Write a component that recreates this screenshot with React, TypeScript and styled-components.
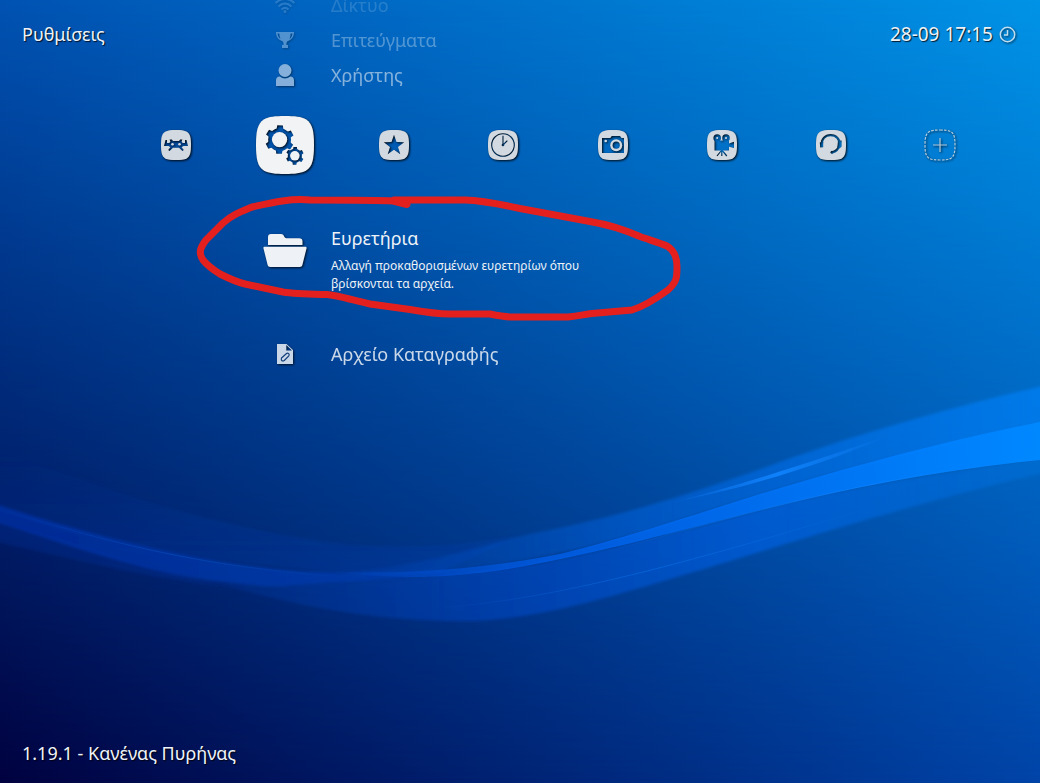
import React from "react";
import styled, { createGlobalStyle, css } from "styled-components";

const GlobalStyle = createGlobalStyle`
  * { box-sizing: border-box; }
  body { margin: 0; background: #00154f; }
  button { font: inherit; color: inherit; background: none; border: 0; padding: 0; text-align: left; cursor: pointer; }
`;

const Screen = styled.div`
  position: relative;
  isolation: isolate;
  display: flex;
  flex-direction: column;
  min-height: 100vh;
  overflow: hidden;
  color: #eef2f7;
  font-family: "Noto Sans", "Open Sans", sans-serif;
  font-size: 18px;
  line-height: 24px;
  text-shadow: 1px 1px 1px rgba(0, 0, 0, 0.8);
  background: linear-gradient(to right, #010240, #0044a8);
`;

const TopGlow = styled.div`
  position: absolute;
  inset: 0;
  z-index: -2;
  background: linear-gradient(to right, #0052b2, #0093e6);
  mask-image: linear-gradient(to bottom, #000, transparent);
`;

const Waves = styled.svg`
  position: absolute;
  inset: 0;
  z-index: -1;
  width: 100%;
  height: 100%;
`;

const Header = styled.header`
  display: grid;
  grid-template-columns: 241px 1fr auto;
  height: 92px;
  padding: 0 24px 0 22px;
  overflow: hidden;
`;

const Title = styled.h1`
  margin: 0;
  padding-top: 22px;
  font-size: 18px;
  font-weight: 400;
  line-height: 24px;
`;

const PreviousItems = styled.div`
  display: flex;
  flex-direction: column;
  justify-content: flex-end;
  align-items: flex-start;
  height: 92px;
`;

const Clock = styled.div`
  display: flex;
  align-items: center;
  gap: 6px;
  height: 24px;
  margin-top: 22px;
  font-size: 19px;
`;

const MenuItem = styled.button<{ $fade?: number }>`
  display: grid;
  grid-template-columns: 44px auto;
  column-gap: 24px;
  align-items: center;
  flex: none;
  height: 35px;
  opacity: ${(p) => p.$fade ?? 1};
`;

const IconCell = styled.span`
  display: flex;
  justify-content: center;
`;

const Glyph = styled.svg`
  display: block;
  fill: currentColor;
  filter: drop-shadow(1px 1px 1px rgba(0, 0, 0, 0.8));
`;

const Tabs = styled.nav`
  display: grid;
  grid-template-columns: repeat(8, 1fr);
  place-items: center;
  height: 106px;
  padding: 0 45px 0 121px;
`;

const TabButton = styled.button<{ $active?: boolean }>`
  display: block;
  width: 30px;
  height: 30px;
  color: #d3d9e0;
  ${(p) =>
    p.$active &&
    css`
      width: 58px;
      height: 58px;
      color: #f2f3f4;
    `}
  svg {
    display: block;
    width: 100%;
    height: 100%;
    overflow: visible;
    filter: drop-shadow(1px 1px 1px rgba(0, 0, 0, 0.9));
  }
`;

const List = styled.main`
  display: flex;
  flex-direction: column;
  align-items: flex-start;
  gap: 43px;
  padding: 28px 0 0 263px;
`;

const SelectedItem = styled.div`
  position: relative;
`;

const SelectedButton = styled.button`
  display: grid;
  grid-template-columns: 44px 300px;
  column-gap: 24px;
`;

const FolderCell = styled.span`
  padding-top: 7px;
`;

const Details = styled.span`
  display: flex;
  flex-direction: column;
  gap: 7px;
`;

const Description = styled.span`
  font-size: 12px;
  line-height: 18px;
`;

const Marker = styled.svg`
  position: absolute;
  top: -32px;
  left: -68px;
  width: 490px;
  height: 130px;
  pointer-events: none;
`;

const Footer = styled.footer`
  margin-top: auto;
  padding: 0 22px 18px;
`;

const SQUIRCLE =
  "M15 0C20 0 23.5 .3 26 1.8C29.3 4 30 8 30 15S29.3 26 26 28.2C23.5 29.7 20 30 15 30S6.5 29.7 4 28.2C.7 26 0 22 0 15S.7 4 4 1.8C6.5 .3 10 0 15 0Z";

function Tile({ id, children }: { id: string; children: React.ReactNode }) {
  return (
    <svg viewBox="0 0 30 30" aria-hidden="true">
      <mask id={id}>
        <path d={SQUIRCLE} fill="#fff" />
        {children}
      </mask>
      <rect width="30" height="30" fill="currentColor" mask={`url(#${id})`} />
    </svg>
  );
}

function Gear({ x, y, r }: { x: number; y: number; r: number }) {
  return (
    <g transform={`translate(${x} ${y}) scale(${r})`}>
      <circle r=".82" />
      {[0, 60, 120, 180, 240, 300].map((a) => (
        <path key={a} d="M-.25 -.7L-.2 -1.02H.2L.25 -.7Z" transform={`rotate(${a + 2})`} />
      ))}
      <circle r=".55" fill="#fff" />
    </g>
  );
}

const tabs: { id: string; label: string; glyph: React.ReactNode }[] = [
  {
    id: "main",
    label: "Κύριο Μενού",
    glyph: (
      <g>
        <path d="M8.6 9.600H10.800L12 11H18L19.200 9.600H21.400L20.600 11.600L21.600 13H24V10H25.500L27 16H22.400L20.600 17.200L22.800 20L21.400 21L18 17.800H12L8.600 21L7.200 20L9.400 17.200L7.600 16H3L4.500 10H6V13H8.400L9.400 11.600Z" />
        <circle cx="11.500" cy="14.300" r="1.300" fill="#fff" />
        <circle cx="18.500" cy="14.300" r="1.300" fill="#fff" />
      </g>
    ),
  },
  {
    id: "settings",
    label: "Ρυθμίσεις",
    glyph: (
      <g>
        <Gear x={12.2} y={12.2} r={7.2} />
        <Gear x={20.1} y={20.6} r={4.5} />
      </g>
    ),
  },
  {
    id: "favorites",
    label: "Αγαπημένα",
    glyph: <path d="M15 4.8L17.5 12.1L25.2 12.2L19 16.9L21.3 24.2L15 19.8L8.7 24.2L11 16.9L4.8 12.2L12.5 12.1Z" />,
  },
  {
    id: "history",
    label: "Ιστορικό",
    glyph: (
      <g fill="none" stroke="#000" strokeWidth="1.1">
        <circle cx="15" cy="15" r="11.3" />
        <path d="M15 6V15L19 11" strokeLinecap="round" />
        <circle cx="15" cy="15" r=".8" fill="#000" />
      </g>
    ),
  },
  {
    id: "images",
    label: "Εικόνες",
    glyph: (
      <g>
        <path d="M4 8H12.3L13.8 6H22L23.5 8H26V23H4Z" />
        <circle cx="18.2" cy="15.2" r="6" fill="#fff" />
        <circle cx="18.2" cy="15.2" r="3.6" />
        <circle cx="7.7" cy="11" r="1.3" fill="#fff" />
      </g>
    ),
  },
  {
    id: "video",
    label: "Βίντεο",
    glyph: (
      <g>
        <circle cx="10.2" cy="8" r="3.8" />
        <circle cx="19" cy="8" r="3.8" />
        <path d="M7.5 10.5H22V13.5L27 11.8V18L22 16.8V20.5H7.5Z" />
        <path d="M14.8 20L10 26M14.8 20V26M14.8 20L19.8 26" stroke="#000" strokeWidth="1.2" />
        <circle cx="10.2" cy="8" r="1" fill="#fff" />
        <circle cx="19" cy="8" r="1" fill="#fff" />
      </g>
    ),
  },
  {
    id: "netplay",
    label: "Netplay",
    glyph: (
      <g>
        <path
          d="M5.800 15C5.200 9 9.500 5.200 14.500 5.200C20.500 5.200 24 9.300 23.400 14.500C22.800 18.500 20 21.500 16 22.500"
          fill="none"
          stroke="#000"
          strokeWidth="2.200"
        />
        <path d="M3.800 12.500L7.200 12V17.200L4.200 17.500Z" />
        <path d="M22 10.500H25.600V16.400L23.600 18.600L21.400 17Z" />
        <circle cx="16" cy="22.300" r="1.500" />
      </g>
    ),
  },
];

function Wave() {
  return (
    <Waves viewBox="0 0 1040 783" preserveAspectRatio="none" aria-hidden="true">
      <defs>
        <linearGradient id="haze" x1="0" y1="0" x2="0" y2="1">
          <stop offset="0" stopColor="#0045d0" stopOpacity="0" />
          <stop offset="1" stopColor="#0045d0" stopOpacity=".2" />
        </linearGradient>
        <linearGradient id="upper">
          <stop offset="0" stopColor="#0058e8" stopOpacity=".08" />
          <stop offset=".4" stopColor="#0070ff" stopOpacity=".36" />
          <stop offset="1" stopColor="#0084ff" stopOpacity=".6" />
        </linearGradient>
        <linearGradient id="lower">
          <stop offset="0" stopColor="#0048d8" stopOpacity=".12" />
          <stop offset=".35" stopColor="#0050e0" stopOpacity=".4" />
          <stop offset=".65" stopColor="#0068f8" stopOpacity=".5" />
          <stop offset="1" stopColor="#0078e8" stopOpacity=".35" />
        </linearGradient>
        <linearGradient id="core">
          <stop offset="0" stopColor="#0060ff" stopOpacity="0" />
          <stop offset=".3" stopColor="#0066ff" stopOpacity=".65" />
          <stop offset="1" stopColor="#0088ff" stopOpacity="1" />
        </linearGradient>
        <linearGradient id="left">
          <stop offset="0" stopColor="#0038c0" stopOpacity=".5" />
          <stop offset=".7" stopColor="#0048d8" stopOpacity=".45" />
          <stop offset="1" stopColor="#0048d8" stopOpacity=".1" />
        </linearGradient>
        <linearGradient id="streak">
          <stop offset="0" stopColor="#1880ff" stopOpacity="0" />
          <stop offset=".5" stopColor="#1084ff" stopOpacity=".9" />
          <stop offset="1" stopColor="#1884ff" stopOpacity="0" />
        </linearGradient>
        <filter id="soft" x="-5%" y="-10%" width="110%" height="120%">
          <feGaussianBlur stdDeviation="1.5" />
        </filter>
      </defs>
      <g filter="url(#soft)">
        <path fill="url(#haze)" d="M-10 445C100 490 230 532 350 545C410 549 460 546 520 536L440 572C330 580 130 555 -10 508Z" />
        <path fill="#0038b8" fillOpacity=".2" d="M-10 518C80 545 170 578 240 587C170 583 90 563 -10 540Z" />
        <path
          fill="url(#left)"
          d="M-10 502C80 532 190 562 300 571C380 575 460 571 530 561L530 567C470 578 350 581 280 586C180 586 90 552 -10 520Z"
        />
        <path
          fill="url(#upper)"
          d="M340 573C420 566 480 547 530 534C620 517 700 491 780 462C870 430 950 408 1050 384V424C900 450 780 488 680 520C580 553 470 577 340 573Z"
        />
        <path
          fill="url(#lower)"
          d="M220 584C300 588 440 580 520 567C620 548 700 526 780 505C870 483 950 472 1050 458V471C900 507 800 540 720 564C600 600 530 623 450 621C360 619 290 604 220 584Z"
        />
      </g>
      <path
        fill="url(#core)"
        d="M330 571C410 576 500 566 560 554C640 534 710 509 780 488C870 461 950 440 1040 422V460C950 469 850 488 780 505C690 528 600 553 520 567C450 579 390 580 330 571Z"
      />
      <path fill="url(#streak)" d="M665 504C740 486 810 462 890 435C820 466 745 488 665 504Z" />
      <path fill="none" stroke="url(#streak)" strokeOpacity=".4" d="M430 608C560 602 720 552 880 505" />
      <path fill="none" stroke="url(#streak)" strokeOpacity=".25" d="M0 509C100 540 200 568 350 577" />
      <path fill="none" stroke="url(#streak)" strokeOpacity=".6" d="M600 553C700 528 860 475 1040 460" />
    </Waves>
  );
}

export default function App() {
  return (
    <Screen>
      <GlobalStyle />
      <TopGlow />
      <Wave />
      <Header>
        <Title>Ρυθμίσεις</Title>
        <PreviousItems>
          <MenuItem $fade={0.16}>
            <IconCell>
              <Glyph width="22" height="18" viewBox="0 0 22 18">
                <g fill="none" stroke="currentColor" strokeWidth="2">
                  <path d="M1.5 7C7 1.500 15 1.500 20.500 7" />
                  <path d="M4.500 10.500C8.500 6.500 13.500 6.500 17.500 10.500" />
                  <path d="M7.500 13.500C9.700 11.500 12.300 11.500 14.500 13.500" />
                </g>
                <circle cx="11" cy="15.500" r="1.500" />
              </Glyph>
            </IconCell>
            Δίκτυο
          </MenuItem>
          <MenuItem $fade={0.34}>
            <IconCell>
              <Glyph width="20" height="18" viewBox="0 0 20 18">
                <path d="M1 1H19C19 5.500 17 8.500 12.500 10.200C11.500 11 11.300 12 11.500 14H13V17H7V14H8.500C8.700 12 8.500 11 7.500 10.200C3 8.500 1 5.500 1 1ZM2.500 2.400C2.800 5 3.700 6.800 5.500 7.800C4.700 6 4.400 4.300 4.300 2.400ZM15.700 2.400C15.600 4.300 15.300 6 14.500 7.800C16.300 6.800 17.200 5 17.500 2.400Z" fillRule="evenodd" />
              </Glyph>
            </IconCell>
            Επιτεύγματα
          </MenuItem>
          <MenuItem $fade={0.56}>
            <IconCell>
              <Glyph width="20" height="24" viewBox="0 0 20 24">
                <circle cx="10" cy="7.500" r="6.500" />
                <path d="M1 23V17.500C1 15 2.500 13.800 4.800 13.600C7.700 16.200 12.300 16.200 15.200 13.600C17.500 13.800 19 15 19 17.500V23Z" />
              </Glyph>
            </IconCell>
            Χρήστης
          </MenuItem>
        </PreviousItems>
        <Clock>
          <time>28-09 17:15</time>
          <Glyph width="17" height="17" viewBox="0 0 17 17" opacity=".8">
            <g fill="none" stroke="currentColor" strokeWidth="1.500">
              <circle cx="8.500" cy="8.500" r="7.200" />
              <path d="M8.500 4V9H5" />
            </g>
          </Glyph>
        </Clock>
      </Header>
      <Tabs>
        {tabs.map((t) => (
          <TabButton key={t.id} $active={t.id === "settings"} aria-label={t.label}>
            <Tile id={`tile-${t.id}`}>{t.glyph}</Tile>
          </TabButton>
        ))}
        <TabButton aria-label="Προσθήκη">
          <svg viewBox="0 0 30 30" fill="none" stroke="currentColor" opacity=".85" aria-hidden="true">
            <path d={SQUIRCLE} strokeWidth="1.200" strokeDasharray="2.600 1.300" />
            <path d="M15 8V22M8 15H22" strokeWidth="1.200" />
          </svg>
        </TabButton>
      </Tabs>
      <List>
        <SelectedItem>
          <SelectedButton>
            <FolderCell>
              <Glyph width="44" height="36" viewBox="0 0 44 36">
                <path d="M5 12V4C5 2 6 1 8 1H18C20 1 20.500 2 21.500 4C22 5 23 5.300 24 5.300H36C38.500 5.300 39.500 6.500 39.500 8.500V12Z" />
                <path d="M1.500 13.700H42.500C43.500 13.700 43.700 14.500 43.500 15.500L39.500 31.500C39 33.300 38.300 34 36.500 34H7.500C5.700 34 5 33.300 4.500 31.500L.5 15.500C.3 14.500 .5 13.700 1.500 13.700Z" />
              </Glyph>
            </FolderCell>
            <Details>
              <span>Ευρετήρια</span>
              <Description>
                Αλλαγή προκαθορισμένων ευρετηρίων όπου
                <br />
                βρίσκονται τα αρχεία.
              </Description>
            </Details>
          </SelectedButton>
          <Marker viewBox="195 195 490 130" aria-hidden="true">
            <path
              fill="none"
              stroke="#e4201f"
              strokeWidth="7"
              strokeLinecap="round"
              strokeLinejoin="round"
              d="M407 205.500L393 202C380 201 360 201 310 201C290 199 270 204 252 208C240 213 232 216 223 224L206 241C199 250 199 255 203 261C207 266 212 270 220 275C230 280 236 283 245 285L283 293C295 295 303 295 327 295.500C335 296 345 299 370 305L410 310.500C430 314 440 315 450 315H490C500 317 505 318 512 318H568C580 317 585 315 592 314.500L632 311C645 307 657 299 668 291C677 283 677 278 677 268C677 257 674 251 667 247C660 244 650 241 640 237.500C625 231 605 225 590 222.500L520 209.500C495 204 480 201.500 465 201H394"
            />
          </Marker>
        </SelectedItem>
        <MenuItem $fade={0.85}>
          <IconCell>
            <Glyph width="18" height="22" viewBox="0 0 18 22">
              <path fillRule="evenodd" d="M1 1H10.500L17 7V21H1ZM10.300 2V7.500H16Z" />
              <path d="M5.500 15L10.500 10.500C12 9.500 14 11 12.800 12.800L8.300 17.500C7 18.200 4.500 18.500 5.500 15Z" fill="none" stroke="#163f78" strokeWidth="1.200" />
            </Glyph>
          </IconCell>
          Αρχείο Καταγραφής
        </MenuItem>
      </List>
      <Footer>1.19.1 - Κανένας Πυρήνας</Footer>
    </Screen>
  );
}
